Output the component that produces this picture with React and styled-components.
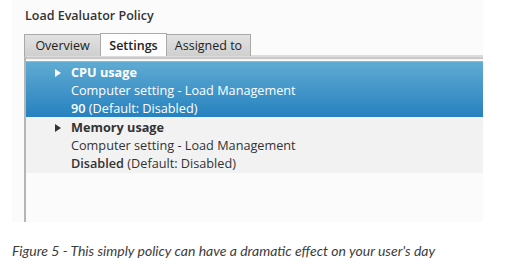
import React from "react";
import styled, { createGlobalStyle } from "styled-components";

const Global = createGlobalStyle`
  html, body { margin: 0; padding: 0; background: #ffffff; }
  body { font-family: "Open Sans", "Noto Sans", sans-serif; }
`;

const Shot = styled.div`
  margin-left: 12px;
  width: 471px;
  height: 222px;
  background: #fbfbfb;
  display: flex;
  flex-direction: column;
  padding-left: 12px;
  box-sizing: border-box;
`;

const Title = styled.div`
  font-family: "Open Sans", sans-serif;
  font-weight: 600;
  font-size: 12.5px;
  color: #333;
  height: 34px;
  line-height: 31px;
  padding-left: 1px;
`;

const TabStrip = styled.div`
  display: flex;
  align-items: flex-end;
  height: 22px;
`;

const Tab = styled.div`
  box-sizing: border-box;
  height: ${(p) => (p.$active ? "23px" : "22px")};
  width: ${(p) => p.$w}px;
  display: flex;
  align-items: center;
  justify-content: center;
  font-size: 12.5px;
  font-weight: ${(p) => (p.$active ? 600 : 400)};
  color: #222;
  border: 1px solid #a9a9a9;
  border-bottom: none;
  margin-right: -1px;
  background: ${(p) =>
    p.$active ? "#fdfdfd" : "linear-gradient(#e2e2e2, #cfcfcf)"};
  position: relative;
  z-index: ${(p) => (p.$active ? 2 : 1)};
`;

const ListFrame = styled.div`
  flex: 1;
  display: flex;
  flex-direction: column;
  border-left: 2px solid #b5b5b5;
  border-top: 2px solid #dcdcdc;
  box-shadow: inset 0 2px 0 #c9c9c9, inset 0 3px 0 #f4f4f4;
  padding-top: 4px;
  margin-top: -1px;
`;

const Item = styled.div`
  display: flex;
  height: ${(p) => p.$h}px;
  box-sizing: border-box;
  padding-left: 29px;
  padding-top: 1px;
  background: ${(p) =>
    p.$selected ? "linear-gradient(#5fabd3, #2781bf)" : "#f2f2f2"};
  border-top: ${(p) => (p.$selected ? "1px solid #7bbde0" : "none")};
  color: ${(p) => (p.$selected ? "#ffffff" : "#333333")};
`;

const Arrow = styled.svg`
  width: 6px;
  height: 8px;
  margin-top: 6px;
  flex: none;
`;

const Lines = styled.div`
  display: flex;
  flex-direction: column;
  padding-left: 10px;
  font-size: 12.7px;
  line-height: 18px;
`;

const Name = styled.span`
  font-weight: 700;
`;

const Strong = styled.span`
  font-weight: 600;
`;

const Caption = styled.div`
  margin: 20px 0 0 12px;
  font-family: "Lato", "Open Sans", sans-serif;
  font-style: italic;
  font-size: 14px;
  color: #3c3c3c;
`;

const Row = ({ selected, h, name, value }) => (
  <Item $selected={selected} $h={h}>
    <Arrow viewBox="0 0 6 8">
      <path d="M0 0 L6 4 L0 8 Z" fill={selected ? "#ffffff" : "#333333"} />
    </Arrow>
    <Lines>
      <Name>{name}</Name>
      <span>Computer setting - Load Management</span>
      <span>
        <Strong>{value}</Strong> (Default: Disabled)
      </span>
    </Lines>
  </Item>
);

export default function App() {
  return (
    <>
      <Global />
      <Shot>
        <Title>Load Evaluator Policy</Title>
        <TabStrip>
          <Tab $w={77}>Overview</Tab>
          <Tab $w={67} $active>
            Settings
          </Tab>
          <Tab $w={85}>Assigned to</Tab>
        </TabStrip>
        <ListFrame>
          <Row selected h={56} name="CPU usage" value="90" />
          <Row h={56} name="Memory usage" value="Disabled" />
        </ListFrame>
      </Shot>
      <Caption>
        Figure 5 - This simply policy can have a dramatic effect on your user's day
      </Caption>
    </>
  );
}
